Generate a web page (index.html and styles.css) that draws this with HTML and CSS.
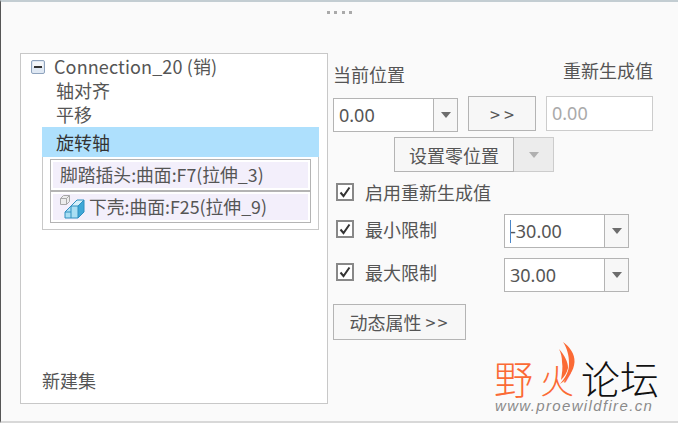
FILE: index.html
```html
<!DOCTYPE html>
<html lang="zh">
<head>
<meta charset="utf-8">
<title>Connection</title>
<link rel="stylesheet" href="styles.css">
</head>
<body>
<div class="window">
  <div class="grip"><i></i><i></i><i></i><i></i></div>
  <div class="main">
    <section class="tree">
      <div class="tree-head">
        <svg class="expander" width="14" height="14" viewBox="0 0 14 14"><rect x="0.5" y="0.5" width="13" height="13" rx="1.5" fill="#dfe8f3" stroke="#8fa3bd"/><rect x="2" y="2" width="10" height="5" fill="#f4f6f9"/><rect x="3" y="6" width="8" height="2" fill="#333"/></svg>
        <span class="head-text">Connection_20 (销)</span>
      </div>
      <div class="tree-row">轴对齐</div>
      <div class="tree-row">平移</div>
      <div class="group">
        <div class="tree-row selected">旋转轴</div>
        <div class="refs">
          <div class="ref"><span>脚踏插头:曲面:F7(拉伸_3)</span></div>
          <div class="ref ref-icon">
            <svg class="part" width="25" height="24" viewBox="0 0 25 24">
              <path d="M0.500 3.500l3-3h6v6l-3 3h-6z" fill="#ececec" stroke="#a8a8a8"/>
              <path d="M0.500 3.500h6v6M6.500 3.500l3-3" fill="none" stroke="#a8a8a8"/>
              <path d="M5 23V17L11 11L17 5H24V17L18 23Z" fill="#a9def3"/>
              <path d="M18 11L24 5V17L18 23Z" fill="#3fa7d6"/>
              <path d="M11 11L17 5H24L18 11Z" fill="#d5f0fa"/>
              <path d="M5 23V17L11 11L17 5H24V17L18 23ZM18 23V11L24 5M11 23V11H18M5 17H11" fill="none" stroke="#2f8fc0"/>
            </svg>
            <span>下壳:曲面:F25(拉伸_9)</span>
          </div>
        </div>
      </div>
      <div class="new-set">新建集</div>
    </section>
    <section class="props">
      <div class="labels"><span class="cur-label">当前位置</span><span class="regen-label">重新生成值</span></div>
      <div class="values">
        <div class="combo combo-cur"><span class="combo-value">0.00</span><span class="combo-arrow"><b></b></span></div>
        <button class="btn btn-arrow">&gt; &gt;</button>
        <div class="readonly">0.00</div>
      </div>
      <div class="zero-row">
        <button class="btn btn-zero">设置零位置</button><span class="zero-drop"><b></b></span>
      </div>
      <label class="check enable"><span class="box"><svg width="14" height="14" viewBox="0 0 14 14"><path d="M2.500 7.500l3 3.500 6-8.500" fill="none" stroke="#333" stroke-width="2"/></svg></span>启用重新生成值</label>
      <div class="limit limit-min">
        <label class="check"><span class="box"><svg width="14" height="14" viewBox="0 0 14 14"><path d="M2.500 7.500l3 3.500 6-8.500" fill="none" stroke="#333" stroke-width="2"/></svg></span>最小限制</label>
        <div class="combo combo-limit"><span class="combo-value"><i class="caret"></i>-30.00</span><span class="combo-arrow"><b></b></span></div>
      </div>
      <div class="limit limit-max">
        <label class="check"><span class="box"><svg width="14" height="14" viewBox="0 0 14 14"><path d="M2.500 7.500l3 3.500 6-8.500" fill="none" stroke="#333" stroke-width="2"/></svg></span>最大限制</label>
        <div class="combo combo-limit"><span class="combo-value">30.00</span><span class="combo-arrow"><b></b></span></div>
      </div>
      <button class="btn btn-dyn">动态属性 <span class="chev">&gt;&gt;</span></button>
    </section>
  </div>
  <div class="logo">
    <div class="logo-title"><span class="logo-red">野</span><span class="logo-red logo-fire">火</span><span class="logo-black">论坛</span></div>
    <svg class="flame" width="45" height="50" viewBox="0 0 45 50"><path d="M27 5C34 10 39 17 38.500 25C38 34 32 42 24 47C29 41 33 35 33 27C33 18 31 11 27 5Z" fill="#fb6a35"/><path d="M23 12C29 19 32 25 32 31C31 36 28 40 25 43C26 36 27 31 26 25C26 20 25 16 23 12Z" fill="#fb6a35"/></svg>
    <div class="logo-url">www.proewildfire.cn</div>
  </div>
</div>
</body>
</html>
```
FILE: styles.css
```css
* { box-sizing: border-box; }
html, body { margin: 0; padding: 0; }
body {
  width: 678px;
  height: 423px;
  overflow: hidden;
  font-family: "Noto Sans CJK SC", "Noto Sans", sans-serif;
  color: #555;
  font-size: 18px;
}
.window {
  position: relative;
  width: 678px;
  height: 423px;
  background: #fafafa;
  border-top: 2px solid #c3cdd2;
  border-left: 1px solid #555;
  border-bottom: 2px solid #d8d8d8;
}
.grip {
  display: flex;
  justify-content: center;
  gap: 4.500px;
  height: 51px;
  padding-top: 9px;
}
.grip i { width: 3px; height: 3px; background: #aaa; }
.main { display: flex; padding-left: 19px; }
.tree {
  width: 308px;
  height: 351px;
  background: #fff;
  border: 1px solid #c8c8c8;
  padding: 0 8px 0 21px;
  display: flex;
  flex-direction: column;
}
.tree-head {
  display: flex;
  align-items: center;
  height: 25px;
  margin-left: -11px;
  line-height: 25px;
}
.head-text { letter-spacing: 0.120px; }
.expander { margin-right: 9px; margin-top: 1px; }
.tree-row {
  height: 24px;
  line-height: 22px;
  padding-left: 14px;
}
.group {
  border: 1px solid #c8c8c8;
  border-top: 0;
  height: 103px;
}
.tree-row.selected {
  height: 30px;
  line-height: 30px;
  margin: 0 -1px;
  background: #aee0fd;
  color: #333;
}
.refs { padding: 2px 7px 0; }
.ref {
  height: 32px;
  border: 1px solid #b4b4b4;
  padding: 2px;
}
.ref span {
  display: block;
  height: 26px;
  line-height: 25px;
  background: #f3effb;
  padding-left: 7px;
  font-size: 17.800px;
  white-space: nowrap;
}
.ref-icon { position: relative; }
.ref-icon span { padding-left: 36px; }
.part { position: absolute; left: 9px; top: 3px; }
.new-set {
  margin-top: auto;
  height: 35px;
  line-height: 24px;
}
.props { width: 330px; padding-left: 5px; }
.labels {
  display: flex;
  justify-content: space-between;
  width: 320px;
  height: 43px;
}
.cur-label { padding-top: 7px; line-height: 28px; }
.regen-label { padding-top: 3px; line-height: 28px; }
.values { display: flex; align-items: flex-start; height: 41px; }
.combo {
  display: flex;
  height: 34px;
  background: #fff;
  border: 1px solid #b4b4b4;
}
.combo-cur { width: 125px; margin-top: 2px; margin-right: 10px; }
.combo-value {
  flex: 1;
  position: relative;
  padding-left: 5px;
  line-height: 33px;
  font-size: 18px;
  font-family: "Noto Sans", sans-serif;
}
.combo-arrow {
  width: 24px;
  background: #f7f7f7;
  border-left: 1px solid #b4b4b4;
  display: flex;
  align-items: center;
  justify-content: center;
}
.combo-arrow b, .zero-drop b {
  width: 0;
  height: 0;
  border-left: 5px solid transparent;
  border-right: 5px solid transparent;
  border-top: 6px solid #6d6d6d;
}
.btn {
  background: #f7f7f7;
  border: 1px solid #b4b4b4;
  color: #555;
  font-family: inherit;
  font-size: 18px;
  padding: 0;
}
.btn-arrow { width: 68px; height: 35px; margin-right: 10px; }
.readonly {
  width: 107px;
  height: 35px;
  background: #fff;
  border: 1px solid #ccc;
  color: #aaa;
  padding-left: 5px;
  line-height: 33px;
  font-size: 18px;
  font-family: "Noto Sans", sans-serif;
}
.zero-row { display: flex; padding-left: 61px; height: 46px; }
.btn-zero { width: 120px; height: 35px; }
.zero-drop {
  width: 40px;
  height: 35px;
  background: #ececec;
  border: 1px solid #ccc;
  border-left: 0;
  display: flex;
  align-items: center;
  justify-content: center;
}
.zero-drop b { border-top-color: #b0b0b0; }
.check {
  display: flex;
  align-items: center;
  color: #555;
}
.box {
  width: 18px;
  height: 18px;
  border: 2px solid #888;
  background: #fff;
  display: flex;
  align-items: center;
  justify-content: center;
  margin-left: 3px;
  margin-right: 11px;
}
.enable { height: 18px; }
.limit { display: flex; align-items: center; justify-content: space-between; width: 296px; }
.limit .check { margin-bottom: 4px; }
.limit-min { height: 34px; margin-top: 13px; }
.limit-max { height: 34px; margin-top: 10px; }
.limit-max .check { margin-bottom: 6px; }
.combo-limit { width: 125px; }
.caret {
  position: absolute;
  left: 5px;
  top: 5px;
  width: 1px;
  height: 23px;
  background: #4a86c8;
}
.btn-dyn { display: block; width: 133px; height: 36px; margin-top: 12px; }
.chev { letter-spacing: 2px; }
.logo {
  position: absolute;
  left: 490px;
  top: 334px;
  width: 176px;
  height: 80px;
}
.logo-title {
  position: absolute;
  left: 3px;
  top: 23px;
  font-size: 39px;
  line-height: 36px;
  font-weight: 300;
  white-space: nowrap;
}
.logo-red { color: #fb6a35; }
.logo-fire { font-size: 34px; margin-left: 7px; }
.logo-black { color: #111; margin-left: 7px; }
.logo-url {
  position: absolute;
  left: 4px;
  top: 61px;
  font-family: "Liberation Sans", sans-serif;
  font-style: italic;
  font-size: 15px;
  letter-spacing: 1.350px;
  color: #8a8a8a;
  white-space: nowrap;
}
.flame { position: absolute; left: 45px; top: 1px; }
```
